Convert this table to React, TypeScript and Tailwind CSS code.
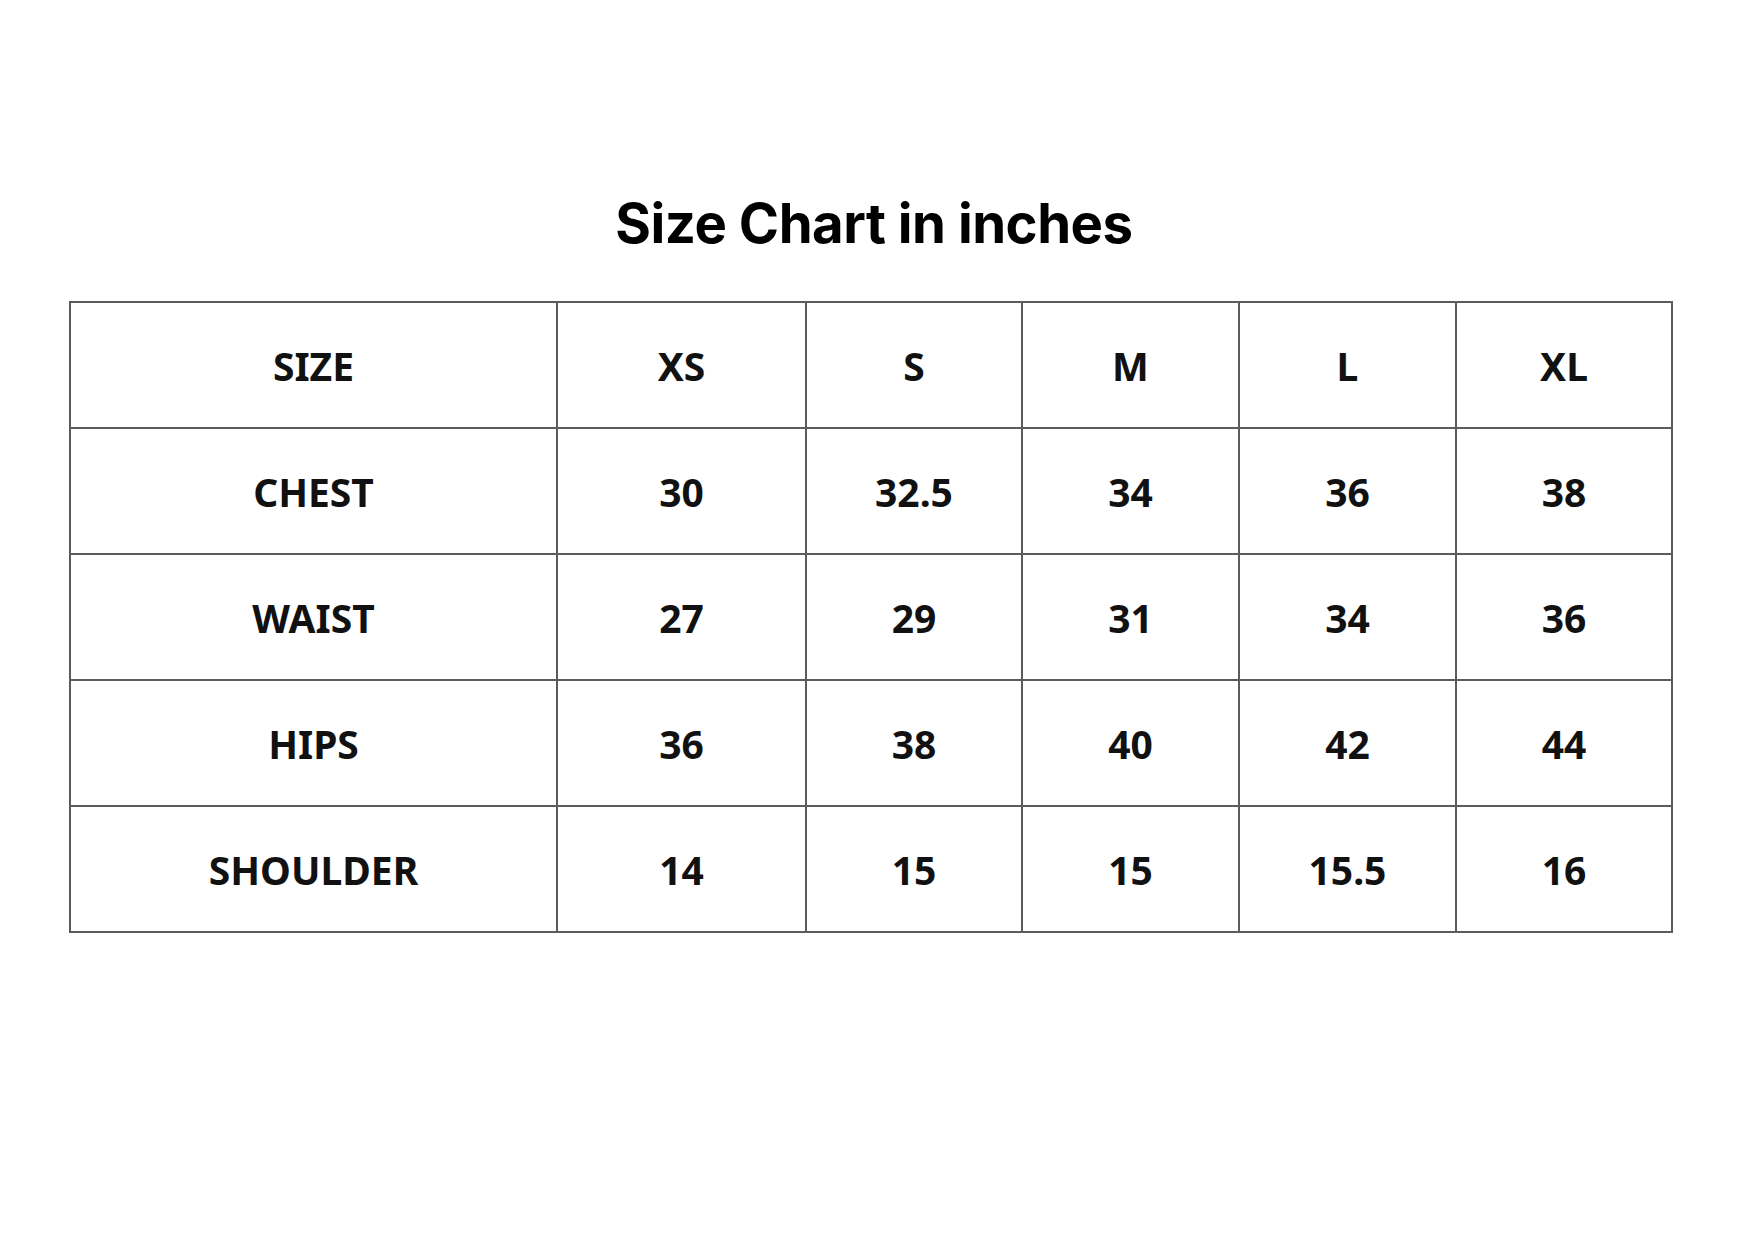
const columns = ["SIZE", "XS", "S", "M", "L", "XL"];

const rows = [
  ["CHEST", "30", "32.5", "34", "36", "38"],
  ["WAIST", "27", "29", "31", "34", "36"],
  ["HIPS", "36", "38", "40", "42", "44"],
  ["SHOULDER", "14", "15", "15", "15.5", "16"],
];

const widths = ["w-[487px]", "w-[249px]", "w-[216px]", "w-[217px]", "w-[217px]", "w-[216px]"];

export default function App() {
  return (
    <main className="min-h-screen w-[1748px] h-[1240px] bg-white text-black">
      <div className="px-[69px] pt-[188px]">
        <h1 className="text-center text-[54.5px] leading-[70px] font-bold font-['Inter',sans-serif] tracking-[-0.5px]">
          Size Chart in inches
        </h1>

        <table className="mt-[43px] w-[1603px] table-fixed border-collapse font-['Lato','Liberation Sans',sans-serif] font-bold text-[#111] text-[39px]">
          <thead>
            <tr className="h-[126px]">
              {columns.map((c, i) => (
                <th key={c} className={`${widths[i]} border-2 border-[#5c5c5c] text-center font-bold pt-[2px]`}>
                  {c}
                </th>
              ))}
            </tr>
          </thead>
          <tbody>
            {rows.map((r) => (
              <tr key={r[0]} className="h-[126px]">
                {r.map((v, i) => (
                  <td key={i} className="border-2 border-[#5c5c5c] text-center pt-[2px]">
                    {v}
                  </td>
                ))}
              </tr>
            ))}
          </tbody>
        </table>
      </div>
    </main>
  );
}
